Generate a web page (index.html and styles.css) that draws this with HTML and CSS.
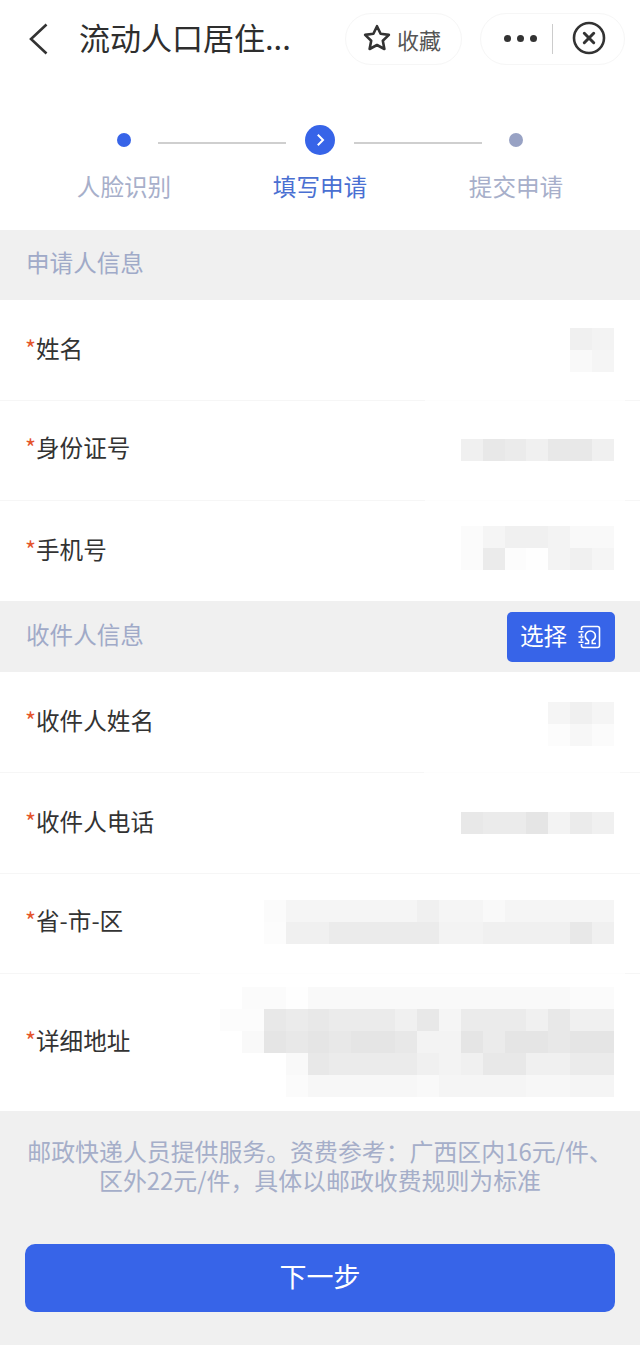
FILE: index.html
```html
<!DOCTYPE html>
<html lang="zh">
<head>
<meta charset="utf-8">
<title>流动人口居住证</title>
<link rel="stylesheet" href="styles.css">
</head>
<body>
<div class="page">
  <header class="nav">
    <svg class="back" viewBox="0 0 22 32" width="22" height="32"><path d="M18.500 1.500 3 16l15.500 14.500" fill="none" stroke="#333" stroke-width="2.600"/></svg>
    <div class="title">流动人口居住...</div>
    <div class="pill fav">
      <svg class="star" viewBox="0 0 30 30" width="30" height="30"><path d="M15 3.200l3.600 7.600 8.300 1.100-6.100 5.800 1.600 8.300L15 22l-7.400 4 1.600-8.300-6.100-5.800 8.300-1.100z" fill="none" stroke="#333" stroke-width="2.600" stroke-linejoin="round"/></svg>
      <span class="fav-text">收藏</span>
    </div>
    <div class="pill capsule">
      <div class="dots"><i></i><i></i><i></i></div>
      <div class="vline"></div>
      <svg class="close" viewBox="0 0 34 34" width="34" height="34"><circle cx="17" cy="17" r="15" fill="none" stroke="#333" stroke-width="2.600"/><path d="M12.300 12.300l9.400 9.400M21.700 12.300l-9.400 9.400" fill="none" stroke="#333" stroke-width="3" stroke-linecap="round"/></svg>
    </div>
  </header>

  <section class="stepper">
    <div class="track">
      <span class="dot dot-done"></span>
      <span class="line line-a"></span>
      <span class="dot-active"><svg viewBox="0 0 30 30" width="30" height="30"><path d="M12.800 9.800 18 15l-5.200 5.200" fill="none" stroke="#fff" stroke-width="2"/></svg></span>
      <span class="line line-b"></span>
      <span class="dot dot-todo"></span>
    </div>
    <div class="step-labels">
      <span>人脸识别</span>
      <span class="current">填写申请</span>
      <span>提交申请</span>
    </div>
  </section>

  <div class="section-head"><span class="head-text">申请人信息</span></div>
  <div class="row">
    <label><em>*</em>姓名</label>
    <div class="mosaic">
      <div class="mrow"><b class="s3"></b><b class="s4"></b></div>
      <div class="mrow"><b class="s7"></b><b class="s5"></b></div>
    </div>
  </div>
  <div class="divider gap-a"></div>
  <div class="row row-short">
    <label><em>*</em>身份证号</label>
    <div class="mosaic up1">
      <div class="mrow"><b class="s3"></b><b class="s1"></b><b class="s2"></b><b class="s3"></b><b class="s1"></b><b class="s1"></b><b class="s3"></b></div>
    </div>
  </div>
  <div class="divider gap-a"></div>
  <div class="row">
    <label><em>*</em>手机号</label>
    <div class="mosaic up3">
      <div class="mrow"><b class="s8"></b><b class="s5"></b><b class="s3"></b><b class="s3"></b><b class="s4"></b><b class="s7"></b><b class="s7"></b></div>
      <div class="mrow"><b class="s8"></b><b class="s2"></b><b class="s9"></b><b class="s0"></b><b class="s4"></b><b class="s3"></b><b class="s5"></b></div>
    </div>
  </div>

  <div class="section-head section-select">
    <span class="head-text">收件人信息</span>
    <button class="select-btn" type="button"><span class="btn-text">选择</span>
      <svg viewBox="0 0 24 24" width="24" height="24"><path d="M4.500 5V3.500a2 2 0 0 1 2-2h14a2 2 0 0 1 2 2v17a2 2 0 0 1-2 2h-14a2 2 0 0 1-2-2V19M4.500 8.500v2.500M4.500 13.500v2.500M1.500 6.700h5M1.500 12h5M1.500 17.300h5" fill="none" stroke="#fff" stroke-width="1.600"/><path d="M7.800 18.500h3.700v-2.800c-1.900-.8-3.100-2.600-3.100-4.700a5 5 0 0 1 10 0c0 2.100-1.200 3.900-3.100 4.700v2.800h3.700" fill="none" stroke="#fff" stroke-width="1.600"/></svg>
    </button>
  </div>
  <div class="row">
    <label><em>*</em>收件人姓名</label>
    <div class="mosaic down2">
      <div class="mrow"><b class="s5"></b><b class="s3"></b><b class="s5"></b></div>
      <div class="mrow"><b class="s9"></b><b class="s6"></b><b class="s8"></b></div>
    </div>
  </div>
  <div class="divider gap-c"></div>
  <div class="row">
    <label><em>*</em>收件人电话</label>
    <div class="mosaic">
      <div class="mrow"><b class="s1"></b><b class="s2"></b><b class="s2"></b><b class="s0d"></b><b class="s4"></b><b class="s2"></b><b class="s3"></b></div>
    </div>
  </div>
  <div class="divider"></div>
  <div class="row row-short">
    <label><em>*</em>省-市-区</label>
    <div class="mosaic up2">
      <div class="mrow"><b class="s8"></b><b class="s5"></b><b class="s5"></b><b class="s5"></b><b class="s5"></b><b class="s5"></b><b class="s5"></b><b class="s3"></b><b class="s5"></b><b class="s5"></b><b class="s7"></b><b class="s5"></b><b class="s5"></b><b class="s5"></b><b class="s5"></b><b class="s5"></b></div>
      <div class="mrow"><b class="s9"></b><b class="s3"></b><b class="s3"></b><b class="s2"></b><b class="s2"></b><b class="s2"></b><b class="s2"></b><b class="s2"></b><b class="s4"></b><b class="s4"></b><b class="s3"></b><b class="s3"></b><b class="s3"></b><b class="s3"></b><b class="s1"></b><b class="s3"></b></div>
    </div>
  </div>
  <div class="divider gap-b"></div>
  <div class="row row-address">
    <label><em>*</em>详细地址</label>
    <div class="mosaic up1">
      <div class="mrow"><b class="s8"></b><b class="s8"></b><b class="s0"></b><b class="s7"></b><b class="s7"></b><b class="s7"></b><b class="s7"></b><b class="s7"></b><b class="s7"></b><b class="s7"></b><b class="s7"></b><b class="s7"></b><b class="s7"></b><b class="s7"></b><b class="s7"></b><b class="s8"></b><b class="s8"></b></div>
      <div class="mrow"><b class="s9"></b><b class="s9"></b><b class="s1"></b><b class="s2"></b><b class="s1"></b><b class="s2"></b><b class="s2"></b><b class="s2"></b><b class="s3"></b><b class="s1"></b><b class="s5"></b><b class="s2"></b><b class="s2"></b><b class="s2"></b><b class="s3"></b><b class="s1"></b><b class="s3"></b><b class="s3"></b></div>
      <div class="mrow"><b class="s7"></b><b class="s0d"></b><b class="s1"></b><b class="s0d"></b><b class="s1"></b><b class="s0d"></b><b class="s0d"></b><b class="s1"></b><b class="s4"></b><b class="s4"></b><b class="s0d"></b><b class="s2"></b><b class="s0d"></b><b class="s0d"></b><b class="s1"></b><b class="s0d"></b><b class="s0d"></b></div>
      <div class="mrow"><b class="s7"></b><b class="s1"></b><b class="s2"></b><b class="s2"></b><b class="s2"></b><b class="s2"></b><b class="s3"></b><b class="s4"></b><b class="s3"></b><b class="s1"></b><b class="s1"></b><b class="s3"></b><b class="s3"></b><b class="s2"></b><b class="s2"></b></div>
      <div class="mrow"><b class="s8"></b><b class="s6"></b><b class="s6"></b><b class="s6"></b><b class="s6"></b><b class="s6"></b><b class="s7"></b><b class="s5"></b><b class="s5"></b><b class="s5"></b><b class="s5"></b><b class="s6"></b><b class="s6"></b><b class="s5"></b><b class="s5"></b></div>
    </div>
  </div>

  <footer class="foot">
    <p class="note">邮政快递人员提供服务。资费参考：广西区内16元/件、区外22元/件，具体以邮政收费规则为标准</p>
    <button class="next" type="button"><span class="next-text">下一步</span></button>
  </footer>
</div>
</body>
</html>
```
FILE: styles.css
```css
* { box-sizing: border-box; }
html, body { margin: 0; padding: 0; }
body {
  width: 640px;
  height: 1345px;
  overflow: hidden;
  background: #fff;
  font-family: "Noto Sans CJK SC", "Noto Sans", sans-serif;
  font-size: 23.6px;
  color: #333;
}
.page { display: flex; flex-direction: column; height: 1345px; }

.nav { display: flex; align-items: center; height: 78px; padding-left: 28px; }
.back { flex: none; margin-bottom: 1px; }
.title { width: 266px; margin-left: 29px; padding-bottom: 4px; font-size: 31px; line-height: 40px; white-space: nowrap; color: #2e2e2e; }
.pill { display: flex; align-items: center; height: 52px; border: 1px solid #f6f6f6; border-radius: 26px; }
.fav { width: 117px; padding-left: 16px; }
.star { flex: none; margin-bottom: 2px; }
.fav-text { margin-left: 5px; padding-bottom: 1px; font-size: 22px; color: #555; }
.capsule { width: 145px; margin-left: 18px; padding-left: 23px; }
.dots { display: flex; gap: 6px; margin-bottom: 2px; }
.dots i { width: 7px; height: 7px; border-radius: 50%; background: #333; }
.vline { width: 1px; height: 30px; margin-left: 15px; margin-bottom: 1px; background: #ccc; }
.close { margin-left: 19px; margin-bottom: 2px; }

.stepper { height: 152px; padding-top: 47px; }
.track { display: flex; align-items: center; height: 30px; padding-left: 117px; }
.dot { width: 14px; height: 14px; border-radius: 50%; }
.dot-done { background: #3764e8; }
.dot-todo { background: #98a2c4; margin-left: 27px; }
.dot-active { display: block; width: 30px; height: 30px; border-radius: 50%; background: #3764e8; }
.dot-active svg { display: block; }
.line { width: 128px; height: 2px; margin-top: 5px; background: #cfcfcf; }
.line-a { margin-left: 27px; margin-right: 19px; }
.line-b { margin-left: 19px; }
.step-labels { display: grid; grid-template-columns: repeat(3, 196px); padding: 13px 26px 0; line-height: 36px; text-align: center; color: #a7afca; }
.step-labels .current { color: #4a70d2; }

.section-head { display: flex; align-items: center; justify-content: space-between; height: 70px; padding: 0 25px 0 26px; background: #f0f0f0; color: #a0aac8; flex: none; }
.head-text { padding-bottom: 6px; }
.section-select { height: 71px; }
.select-btn { display: flex; align-items: center; justify-content: space-between; width: 108px; height: 50px; padding: 0 13px; border: 0; border-radius: 5px; background: #3764e8; color: #fff; font: inherit; }
.btn-text { padding-bottom: 3px; }
.select-btn svg { flex: none; margin-right: 1px; }

.row { display: flex; align-items: center; justify-content: space-between; height: 100px; padding: 0 26px 0 25px; flex: none; }
.row-short { height: 99px; }
.row-short label { padding-bottom: 8px; }
.row-address { height: 137px; }
.row label { padding-bottom: 5px; white-space: nowrap; color: #333; }
.row.row-short label { padding-bottom: 8px; }
.row em { font-style: normal; color: #e4552c; }

.divider { height: 1px; flex: none; background: #f6f6f6; }
.gap-a { background: linear-gradient(to right, #f6f6f6 425px, #fdfdfd 425px, #fdfdfd 625px, #f6f6f6 625px); }
.gap-b { background: linear-gradient(to right, #f6f6f6 200px, #fdfdfd 200px, #fdfdfd 625px, #f6f6f6 625px); }
.gap-c { background: linear-gradient(to right, #f6f6f6 424px, #fdfdfd 424px, #fdfdfd 620px, #f6f6f6 620px); }

.mosaic { display: flex; flex-direction: column; }
.up1 { margin-bottom: 2px; }
.up2 { margin-bottom: 4px; }
.up3 { margin-bottom: 6px; }
.down2 { margin-top: 4px; }
.mrow { display: flex; justify-content: flex-end; }
.mrow b { display: block; width: 21.9px; height: 22px; }
.s0d { background: #e5e5e5; }
.s0 { background: #fefefe; }
.s1 { background: #e8e8e8; }
.s2 { background: #ebebeb; }
.s3 { background: #f0f0f0; }
.s4 { background: #f3f3f3; }
.s5 { background: #f5f5f5; }
.s6 { background: #f7f7f7; }
.s7 { background: #f9f9f9; }
.s8 { background: #fbfbfb; }
.s9 { background: #fcfcfc; }

.foot { flex: 1; padding: 25px 25px 0; background: #f0f0f0; }
.note { margin: 0; font-size: 23.9px; line-height: 29px; text-align: center; color: #a5aec9; }
.next { display: block; width: 590px; height: 68px; margin-top: 50px; border: 0; border-radius: 10px; background: #3764e8; color: #fff; font-family: inherit; font-size: 27px; }
.next-text { display: block; padding-bottom: 6px; }
```
